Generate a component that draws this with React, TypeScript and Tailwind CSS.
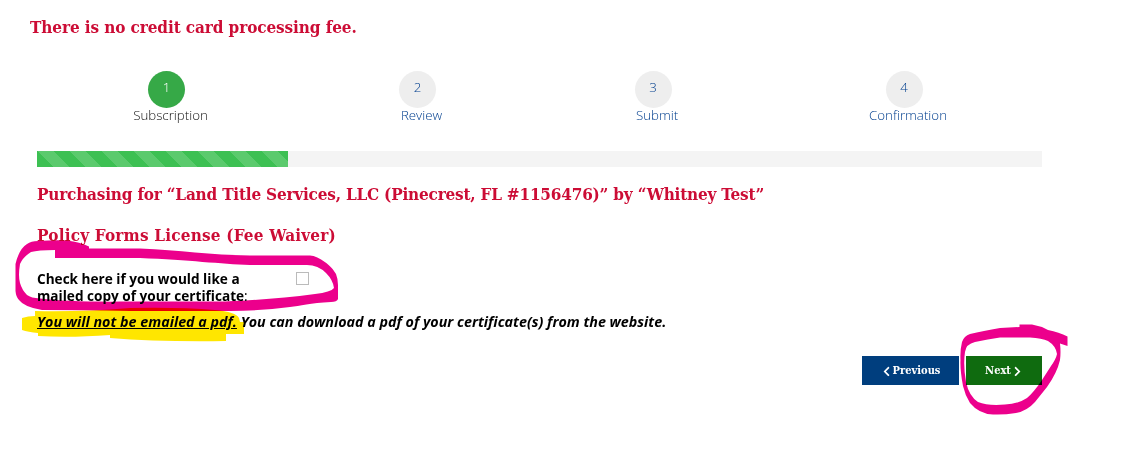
import { useState } from 'react'
import { FaChevronLeft, FaChevronRight } from 'react-icons/fa'

const steps = [
    { id: 1, label: 'Subscription' },
    { id: 2, label: 'Review' },
    { id: 3, label: 'Submit' },
    { id: 4, label: 'Confirmation' },
]

const slab = "font-['Roboto_Slab','DejaVu_Serif_Condensed','DejaVu_Serif',serif] font-stretch-condensed"
const heading = 'leading-[22px] font-semibold whitespace-nowrap text-[#cc0c35]'

function Steps({ current }: { current: number }) {
    return (
        <ol className="grid grid-cols-[267px_235px_236px_266px] text-center text-[13.3px] leading-4 font-light">
            {steps.map((step) => {
                const active = step.id === current
                return (
                    <li key={step.id} className={`flex flex-col items-center ${active ? 'text-[#111]' : 'text-[#003e8e]'}`}>
                        <span
                            className={`mr-2 flex size-[37px] justify-center rounded-full pt-[8px] ${active ? 'bg-[#36a947] text-white' : 'bg-[#eeeeee]'}`}
                        >
                            {step.id}
                        </span>
                        <span className="-mt-px whitespace-nowrap">{step.label}</span>
                    </li>
                )
            })}
        </ol>
    )
}

// Highlighter and marker strokes drawn over the form
function Annotations() {
    return (
        <svg
            className="pointer-events-none absolute inset-0 mix-blend-multiply"
            width="1125"
            height="459"
            viewBox="0 0 1125 459"
            fillRule="evenodd"
        >
            <path
                fill="#ffe600"
                d="M22 318Q28 316 35 316V311Q80 312 130 308Q180 307 215 310Q236 312 239 318L240 322H244V334H226V341Q160 342 110 338V335Q70 338 38 336V333Q28 332 22 330Z"
            />
            <path
                className="mix-blend-multiply"
                fill="#ec008c"
                d="M38 241Q54 240 67 240.500Q80 242 89 246.500V248.500H140C180 250 210 255 250 255.500H310C319 256 332 266 336 274Q338 279 338 285V299Q337 302 331 302C310 303 300 306 290 307Q260 311 230 311H130Q80 310 42 310Q24 307 19 300Q16 297 15.500 291V264Q19 249 27 244Q31 241 38 241ZM55 250Q38 250 31 252Q23 257 20 264Q18 276 20 283Q22 290 27 295Q31 298 40 298.500C60 301 90 302 130 301.500H225C260 300 285 298 315 294Q331 292 334 288Q333 280 326 273Q318 265 307 265H250C220 264 190 260 140 258H55Z"
            />
            <path
                className="mix-blend-multiply"
                fill="#ec008c"
                d="M1019.500 324.500H1032Q1041 326 1048 330Q1059 332 1067.500 336.500V346L1060 343.500Q1061 352 1060 360Q1057 373 1047 387L1035 402Q1027 411 1016 413Q1004 415 993 414.500Q979 414 970 403Q965 395 963 386Q960 370 960.500 360Q960 350 962 342Q964 336 970 334Q983 331 1000 328L1019.500 327ZM975 342Q988 339 1000 337.500H1030Q1042 338 1048 341Q1056 346 1057 354Q1056 359 1051 366L1042 380Q1034 392 1027 398Q1018 404 1005 404.500Q988 406 978 402Q969 396 966 382Q963 365 965 352Q966 344 975 342Z"
            />
        </svg>
    )
}

function App() {
    const [mailCopy, setMailCopy] = useState(false)

    return (
        <div className="relative isolate h-[459px] w-[1125px] overflow-hidden bg-white pt-[16px] pl-[37px] font-['Open_Sans',sans-serif] text-black">
            <h2 className={`-ml-[7px] h-[55px] text-[17px] tracking-[-0.1px] ${heading} ${slab}`}>
                There is no credit card processing fee.
            </h2>

            <main className="w-[1005px]">
                <Steps current={1} />

                <div className="mt-[28px] h-4 bg-[#f4f4f4]">
                    <div className="h-full w-1/4 bg-[#3dc053] bg-[linear-gradient(45deg,#5bca6d_25%,transparent_25%,transparent_50%,#5bca6d_50%,#5bca6d_75%,transparent_75%)] bg-size-[32px_32px]" />
                </div>

                <h2 className={`mt-[16px] h-[41px] text-[17px] tracking-[-0.2px] ${heading} ${slab}`}>
                    Purchasing for “Land Title Services, LLC (Pinecrest, FL #1156476)” by “Whitney Test”
                </h2>
                <h2 className={`h-[46px] text-[17px] tracking-[0.2px] ${heading} ${slab}`}>
                    Policy Forms License (Fee Waiver)
                </h2>

                <label className="flex items-start text-[13.6px] leading-[17px]">
                    <span className="w-[259px] whitespace-nowrap">
                        <b>
                            Check here if you would like a
                            <br />
                            mailed copy of your certificate
                        </b>
                        :
                    </span>
                    <input
                        type="checkbox"
                        checked={mailCopy}
                        onChange={(e) => setMailCopy(e.target.checked)}
                        className="mt-[2px] size-[13px] appearance-none border border-[#bbb] bg-white"
                    />
                </label>

                <p className="mt-[8px] text-[14.3px] leading-5 font-bold whitespace-nowrap italic">
                    <span className="underline">You will not be emailed a pdf.</span> You can download a pdf of your
                    certificate(s) from the website.
                </p>

                <div className={`mt-[24px] flex justify-end gap-[7px] text-[11px] font-bold text-white ${slab}`}>
                    <button className="flex h-[29px] w-[97px] items-center justify-center gap-px bg-[#003e7e] pt-px">
                        <FaChevronLeft size={11} />
                        Previous
                    </button>
                    <button className="flex h-[29px] w-[76px] items-center justify-center gap-px bg-[#0f6b0f] pt-px">
                        Next
                        <FaChevronRight size={11} />
                    </button>
                </div>
            </main>

            <Annotations />
        </div>
    )
}

export default App
